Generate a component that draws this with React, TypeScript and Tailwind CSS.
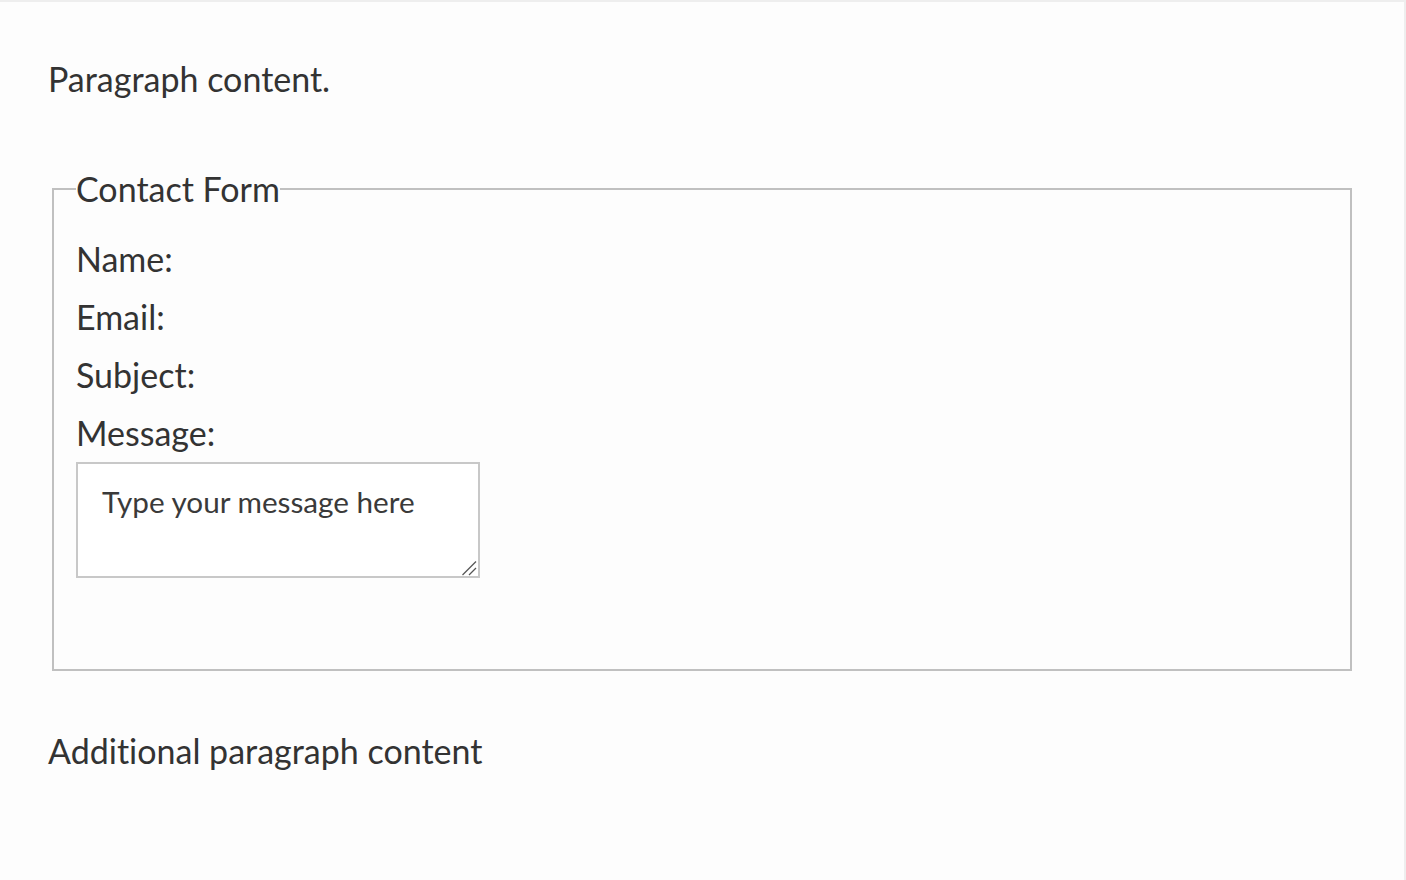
import React from 'react';

const font = { fontFamily: 'Lato, "Open Sans", sans-serif', fontVariantLigatures: 'none' as const };

export default function App() {
  return (
    <div
      className="h-[880px] w-full bg-[#fdfdfd] border-t-2 border-r-2 border-[#eeeeee] text-[#333333] overflow-hidden"
      style={font}
    >
      <div className="px-[48px] pt-[48px]">
        <p className="text-[34px] leading-[58px]">Paragraph content.</p>

        <fieldset className="mt-[52px] mx-[4px] border-2 border-[#c0c0c0] px-[22px] pt-[12px] pb-[91px]">
          <legend className="text-[34px] leading-[58px] p-0">Contact Form</legend>
          <form className="flex flex-col">
            <label className="text-[34px] leading-[58px]">Name:</label>
            <label className="text-[34px] leading-[58px]">Email:</label>
            <label className="text-[34px] leading-[58px]">Subject:</label>
            <label className="text-[34px] leading-[58px]">Message:</label>
            <div className="relative w-[404px] h-[116px]">
              <textarea
                className="block w-full h-full resize-none border-2 border-[#c8c8c8] bg-white px-[24px] pt-[23px] text-[29.7px] leading-[30px] placeholder:text-[#3a3a3a] outline-none"
                style={font}
                placeholder="Type your message here"
              />
              <svg
                className="absolute right-[3px] bottom-[2px] pointer-events-none"
                width="16"
                height="16"
                viewBox="0 0 16 16"
              >
                <line x1="1.5" y1="15" x2="15" y2="1.5" stroke="#555555" strokeWidth="1.2" />
                <line x1="8" y1="15" x2="15" y2="8" stroke="#555555" strokeWidth="1.2" />
              </svg>
            </div>
          </form>
        </fieldset>

        <p className="mt-[51px] text-[34px] leading-[58px]">Additional paragraph content</p>
      </div>
    </div>
  );
}
